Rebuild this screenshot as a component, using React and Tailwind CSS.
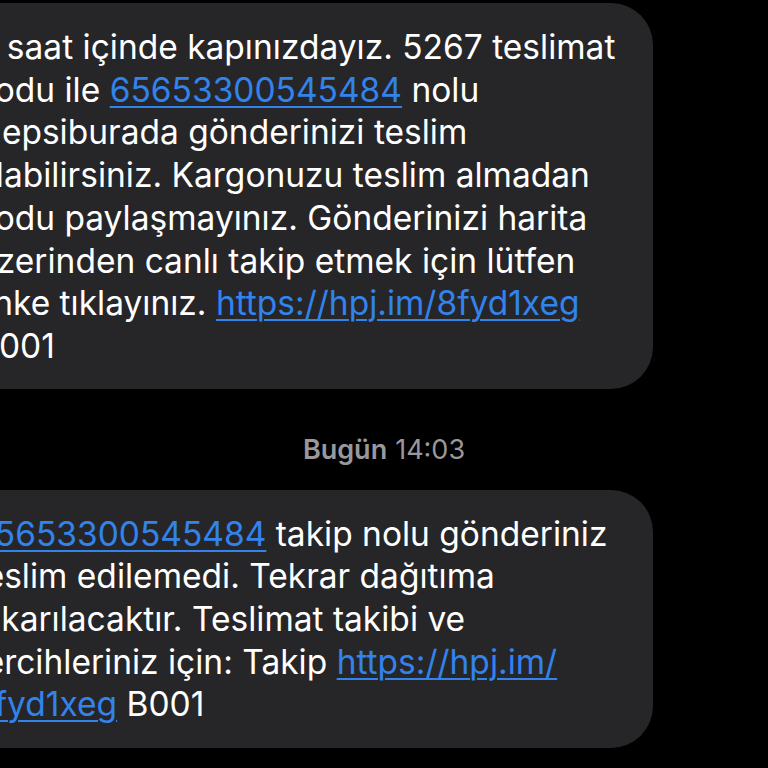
import React from 'react';

const Link = ({ children }) => (
  <span className="text-[#3283ec] underline decoration-[2px] underline-offset-[4px]">{children}</span>
);

const Bubble = ({ lines, className = '' }) => (
  <div className={`-ml-[60px] w-[713px] rounded-r-[42px] bg-[#262628] ${className}`}>
    {lines.map((line, i) => (
      <div key={i} className="whitespace-nowrap leading-[42.7px]">
        {line}
      </div>
    ))}
  </div>
);

const first = [
  <>2 saat içinde kapınızdayız. 5267 teslimat</>,
  <>kodu ile <Link>65653300545484</Link> nolu</>,
  <>Hepsiburada gönderinizi teslim</>,
  <>alabilirsiniz. Kargonuzu teslim almadan</>,
  <>kodu paylaşmayınız. Gönderinizi harita</>,
  <>üzerinden canlı takip etmek için lütfen</>,
  <>linke tıklayınız. <Link>https://hpj.im/8fyd1xeg</Link></>,
  <>B001</>,
];

const second = [
  <><Link>65653300545484</Link> takip nolu gönderiniz</>,
  <>teslim edilemedi. Tekrar dağıtıma</>,
  <>çıkarılacaktır. Teslimat takibi ve</>,
  <>tercihleriniz için: Takip <Link>https://hpj.im/</Link></>,
  <><Link>8fyd1xeg</Link> B001</>,
];

export default function App() {
  return (
    <div
      className="h-[768px] w-[768px] overflow-hidden bg-black text-[33.5px] text-white"
      style={{ fontFamily: 'Inter, "Noto Sans", sans-serif' }}
    >
      <div className="pt-[3px]">
        <Bubble lines={first} className="pl-[37px] pt-[23px] pb-[21px]" />
        <div className="flex h-[101px] justify-center pt-[44px] text-[27px] leading-[34px] text-[#98989d]">
          <span className="font-semibold">Bugün</span>
          <span className="ml-[8px]">14:03</span>
        </div>
        <Bubble lines={second} className="pl-[34px] pt-[23px] pb-[22px]" />
      </div>
    </div>
  );
}
